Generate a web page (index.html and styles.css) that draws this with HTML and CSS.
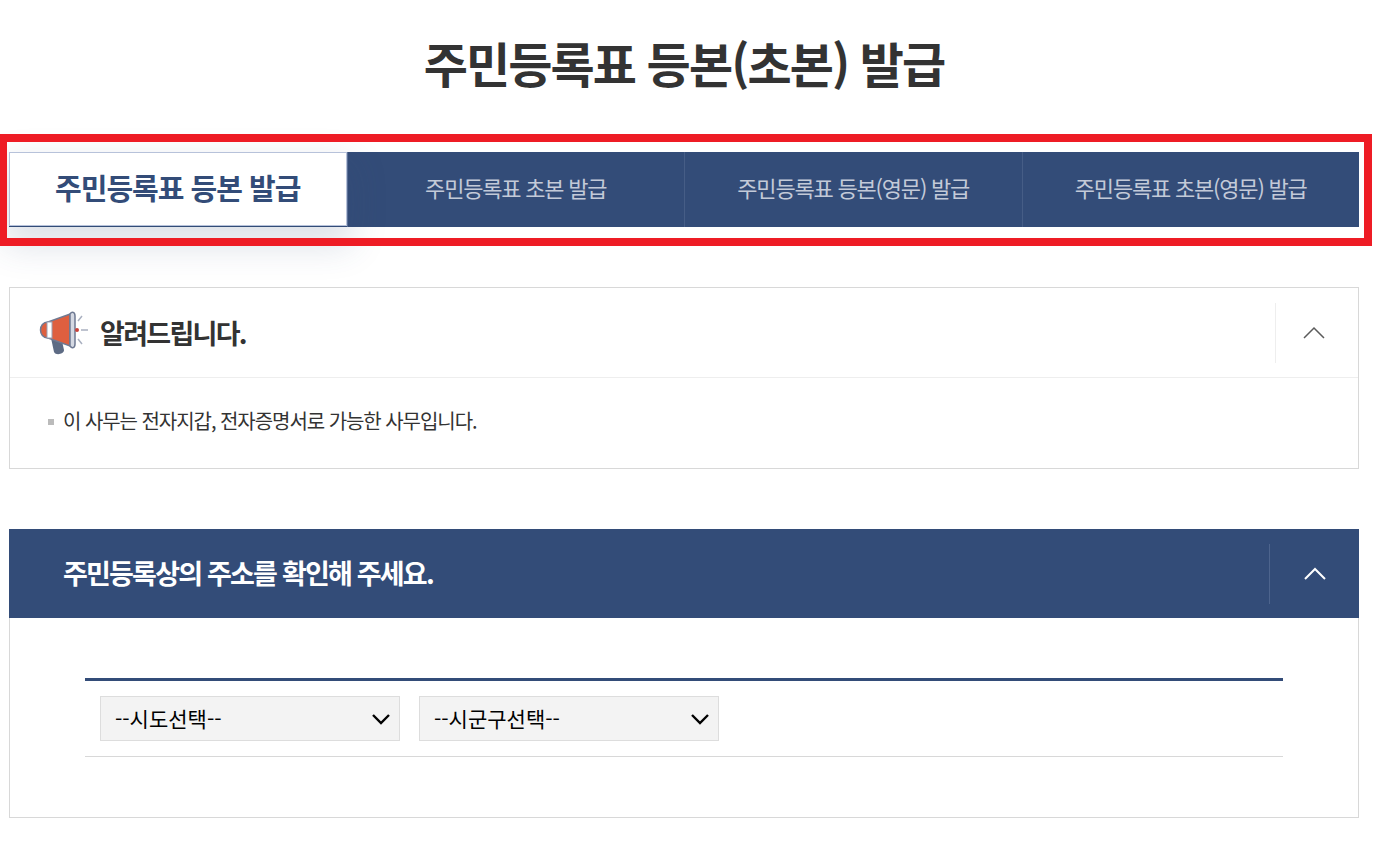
FILE: index.html
```html
<!DOCTYPE html>
<html lang="ko">
<head>
<meta charset="utf-8">
<title>주민등록표 등본(초본) 발급</title>
<link rel="stylesheet" href="styles.css">
</head>
<body>
<div class="page">
  <h1 class="title">주민등록표 등본(초본) 발급</h1>
  <ul class="tabs">
    <li class="tab active">주민등록표 등본 발급</li>
    <li class="tab">주민등록표 초본 발급</li>
    <li class="tab">주민등록표 등본(영문) 발급</li>
    <li class="tab">주민등록표 초본(영문) 발급</li>
  </ul>
  <section class="notice">
    <header class="notice-head">
      <svg class="megaphone" width="50" height="46" viewBox="0 0 50 46" aria-hidden="true">
        <path d="M12 28 L23 31 L25 40 C25 44 17 46 15 42 Z" fill="#5d6b84"/>
        <path d="M9 12 C-1 12 -1 28 9 28 Z" fill="#de5f3f" stroke="#6f7a93" stroke-width="1.5"/>
        <path d="M9 12 L31 4 L31 36 L9 28 Z" fill="#de5f3f" stroke="#6f7a93" stroke-width="1.5"/>
        <rect x="8" y="12" width="5" height="16" fill="#fff" stroke="#9aa2b5" stroke-width="1"/>
        <path d="M31 4 C33 1 36 2 36 6 L36 34 C36 38 33 39 31 36 Z" fill="#d5d9e3" stroke="#6f7a93" stroke-width="1.5"/>
        <circle cx="38" cy="20" r="2" fill="#c9413a"/>
        <path d="M39 11 L43 6 M42 20 L49 20 M39 29 L43 34" stroke="#a9b0c0" stroke-width="1.5" fill="none"/>
      </svg>
      <h2 class="notice-title">알려드립니다.</h2>
      <div class="toggle">
        <svg width="22" height="13" viewBox="0 0 22 13" aria-hidden="true"><path d="M1 12 L11 2 L21 12" fill="none" stroke="#5b5b5b" stroke-width="1.5"/></svg>
      </div>
    </header>
    <ul class="notice-body">
      <li class="notice-item">이 사무는 전자지갑, 전자증명서로 가능한 사무입니다.</li>
    </ul>
  </section>
  <section class="address">
    <header class="address-head">
      <h2 class="address-title">주민등록상의 주소를 확인해 주세요.</h2>
      <div class="toggle toggle-light">
        <svg width="22" height="13" viewBox="0 0 22 13" aria-hidden="true"><path d="M1 12 L11 2 L21 12" fill="none" stroke="#fff" stroke-width="2"/></svg>
      </div>
    </header>
    <div class="address-body">
      <div class="form-row">
        <select class="field"><option>--시도선택--</option></select>
        <select class="field"><option>--시군구선택--</option></select>
      </div>
    </div>
  </section>
</div>
<div class="highlight"></div>
</body>
</html>
```
FILE: styles.css
```css
* { box-sizing: border-box; }
html, body { margin: 0; padding: 0; background: #fff; overflow: hidden; }
body { height: 847px; font-family: "Noto Sans CJK KR", "Noto Sans", sans-serif; color: #333; position: relative; }
.page { width: 1350px; margin-left: 9px; padding-top: 27px; }
.title { margin: 0; text-align: center; font-size: 48px; line-height: 70px; font-weight: 700; letter-spacing: -1.9px; color: #333; height: 125px; }
.tabs { display: grid; grid-template-columns: repeat(4, 1fr); list-style: none; margin: 0; padding: 0; height: 75px; background: #334c78; }
.tab { display: flex; align-items: center; justify-content: center; color: #c3cad8; font-size: 22px; letter-spacing: -1.2px; border-left: 1px solid #465d86; padding-bottom: 6px; }
.tab:first-child { border-left: 0; }
.tab.active + .tab { border-left-color: #5a6f96; }
.tab.active { height: 74px; background: #fff; color: #334c78; font-size: 29px; font-weight: 700; letter-spacing: -1px; border: 1px solid #b7c2da; padding-bottom: 4px; box-shadow: 0 15px 35px 5px rgba(52, 77, 121, 0.17); }
.notice { margin-top: 60px; height: 182px; border: 1px solid #d8d8d8; }
.notice-head { height: 90px; display: flex; align-items: center; padding-left: 29px; border-bottom: 1px solid #eeeeee; }
.megaphone { flex: none; }
.notice-title { margin: 0 0 0 11px; flex: 1; font-size: 27px; font-weight: 700; letter-spacing: -1.7px; color: #333; }
.toggle { flex: none; width: 83px; height: 60px; display: flex; align-items: center; justify-content: center; padding-right: 7px; border-left: 1px solid #eeeeee; }
.notice-body { list-style: none; margin: 0; padding: 29px 0 0 38px; }
.notice-item { position: relative; padding-left: 15px; font-size: 20px; line-height: 28px; letter-spacing: -1.05px; color: #333; }
.notice-item::before { content: ""; position: absolute; left: 0; top: 12px; width: 6px; height: 6px; background: #bbbbbb; }
.address { margin-top: 60px; height: 289px; border: 1px solid #d8d8d8; border-top: 0; }
.address-head { height: 89px; margin: 0 -1px; display: flex; align-items: center; background: #334c78; padding-left: 54px; }
.address-title { margin: 0 0 3px; flex: 1; font-size: 27px; font-weight: 700; letter-spacing: -1.8px; color: #fff; }
.toggle-light { width: 90px; padding-right: 0; border-left-color: #4d648d; }
.address-body { padding: 60px 75px 0; }
.form-row { display: flex; gap: 19px; height: 79px; padding: 15px 15px 0; border-top: 3px solid #334c78; border-bottom: 1px solid #d8d8d8; }
.field { appearance: none; width: 300px; height: 45px; padding: 0 40px 2px 14px; font-family: "Noto Sans CJK KR", sans-serif; font-size: 21px; color: #000; background: #f3f3f3 url("data:image/svg+xml,%3Csvg xmlns='http://www.w3.org/2000/svg' width='20' height='12' viewBox='0 0 20 12'%3E%3Cpath d='M2 2 L10 10 L18 2' fill='none' stroke='%23000' stroke-width='2.4'/%3E%3C/svg%3E") no-repeat right 8px center; border: 1px solid #dddddd; border-radius: 0; }
.highlight { position: absolute; left: -1px; top: 134px; width: 1373px; height: 112px; border: 8px solid #ee1c25; pointer-events: none; }
```
